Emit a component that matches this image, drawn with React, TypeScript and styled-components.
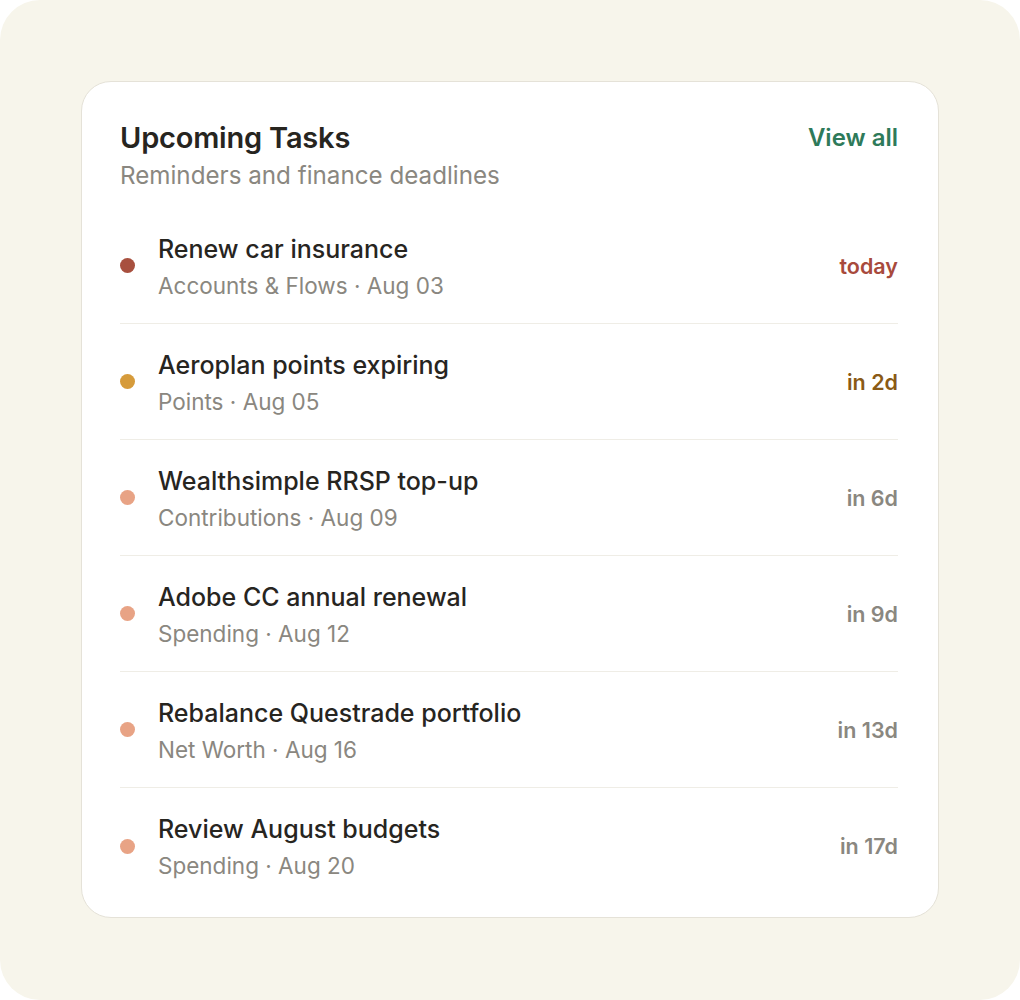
import styled, { createGlobalStyle } from 'styled-components';

const GlobalStyle = createGlobalStyle`
  html, body {
    margin: 0;
    padding: 0;
    background: #ffffff;
  }
  body {
    font-family: Inter, "Noto Sans", "Liberation Sans", sans-serif;
    -webkit-font-smoothing: antialiased;
  }
`;

const Page = styled.div`
  width: 1020px;
  height: 1000px;
  box-sizing: border-box;
  background: #f7f5eb;
  border-radius: 40px;
  padding: 81px;
`;

const Card = styled.section`
  box-sizing: border-box;
  width: 858px;
  height: 837px;
  background: #ffffff;
  border: 1.5px solid #e5e2d8;
  border-radius: 30px;
  padding: 37px 40px 14px 38px;
  display: flex;
  flex-direction: column;
`;

const Header = styled.div`
  display: flex;
  justify-content: space-between;
  align-items: flex-start;
  margin-bottom: 16px;
`;

const HeaderText = styled.div`
  display: flex;
  flex-direction: column;
  gap: 3px;
`;

const Title = styled.h2`
  margin: 0;
  font-size: 29px;
  line-height: 38px;
  font-weight: 600;
  color: #27251f;
  letter-spacing: -0.2px;
`;

const Subtitle = styled.p`
  margin: 0;
  font-size: 24.2px;
  line-height: 32px;
  color: #8a8780;
`;

const ViewAll = styled.a`
  font-size: 24px;
  line-height: 38px;
  font-weight: 600;
  color: #2e7a5a;
  text-decoration: none;
  cursor: pointer;
`;

const List = styled.ul`
  list-style: none;
  margin: 0;
  padding: 0;
`;

const Row = styled.li`
  display: flex;
  align-items: center;
  height: 116px;
  box-sizing: border-box;
  border-bottom: 1.5px solid #efede6;

  &:last-child {
    border-bottom: none;
  }
`;

const Dot = styled.span<{ $color: string }>`
  width: 15px;
  height: 15px;
  border-radius: 50%;
  background: ${p => p.$color};
  flex: none;
  margin-right: 23px;
`;

const RowText = styled.div`
  flex: 1;
  display: flex;
  flex-direction: column;
  gap: 8px;
  padding-top: 2px;
`;

const RowTitle = styled.div`
  font-size: 25px;
  line-height: 30px;
  font-weight: 500;
  color: #27251f;
`;

const RowMeta = styled.div`
  font-size: 22.5px;
  line-height: 28px;
  color: #8a8780;
`;

const Due = styled.span<{ $color: string }>`
  font-size: 21.5px;
  font-weight: 600;
  color: ${p => p.$color};
`;

type Task = {
  title: string;
  area: string;
  date: string;
  due: string;
  dot: string;
  dueColor: string;
};

const tasks: Task[] = [
  { title: 'Renew car insurance', area: 'Accounts & Flows', date: 'Aug 03', due: 'today', dot: '#a8503f', dueColor: '#a84a3c' },
  { title: 'Aeroplan points expiring', area: 'Points', date: 'Aug 05', due: 'in 2d', dot: '#d69b3b', dueColor: '#8a5a16' },
  { title: 'Wealthsimple RRSP top-up', area: 'Contributions', date: 'Aug 09', due: 'in 6d', dot: '#e8a385', dueColor: '#8a8780' },
  { title: 'Adobe CC annual renewal', area: 'Spending', date: 'Aug 12', due: 'in 9d', dot: '#e8a385', dueColor: '#8a8780' },
  { title: 'Rebalance Questrade portfolio', area: 'Net Worth', date: 'Aug 16', due: 'in 13d', dot: '#e8a385', dueColor: '#8a8780' },
  { title: 'Review August budgets', area: 'Spending', date: 'Aug 20', due: 'in 17d', dot: '#e8a385', dueColor: '#8a8780' },
];

const App = () => {
  return (
    <>
      <GlobalStyle />
      <Page>
        <Card>
          <Header>
            <HeaderText>
              <Title>Upcoming Tasks</Title>
              <Subtitle>Reminders and finance deadlines</Subtitle>
            </HeaderText>
            <ViewAll>View all</ViewAll>
          </Header>
          <List>
            {tasks.map(t => (
              <Row key={t.title}>
                <Dot $color={t.dot} />
                <RowText>
                  <RowTitle>{t.title}</RowTitle>
                  <RowMeta>
                    {t.area} · {t.date}
                  </RowMeta>
                </RowText>
                <Due $color={t.dueColor}>{t.due}</Due>
              </Row>
            ))}
          </List>
        </Card>
      </Page>
    </>
  );
};

export default App;
